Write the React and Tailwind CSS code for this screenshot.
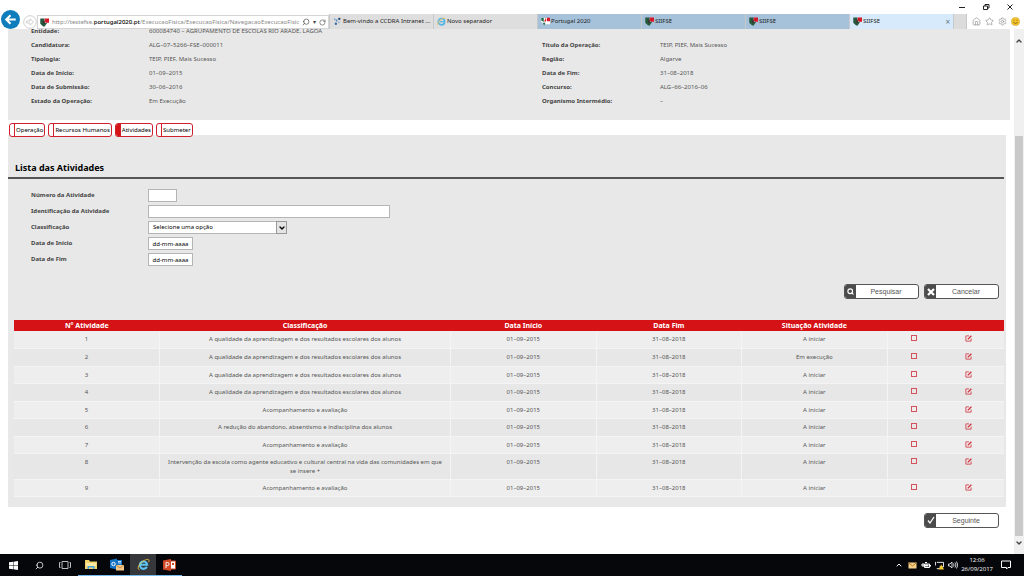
import { useState } from "react";
import { ChevronUp, ChevronDown, House, Star, Settings, Search, RotateCw } from "lucide-react";

const infoLeft = [
  ["Entidade:", "600084740 – AGRUPAMENTO DE ESCOLAS RIO ARADE, LAGOA"],
  ["Candidatura:", "ALG–07–5266–FSE–000011"],
  ["Tipologia:", "TEIP, PIEF, Mais Sucesso"],
  ["Data de Início:", "01–09–2015"],
  ["Data de Submissão:", "30–06–2016"],
  ["Estado da Operação:", "Em Execução"],
];

const infoRight = [
  ["Título da Operação:", "TEIP, PIEF, Mais Sucesso"],
  ["Região:", "Algarve"],
  ["Data de Fim:", "31–08–2018"],
  ["Concurso:", "ALG–66–2016–06"],
  ["Organismo Intermédio:", "–"],
];

const sections = ["Operação", "Recursos Humanos", "Atividades", "Submeter"];

const QUALIDADE = "A qualidade da aprendizagem e dos resultados escolares dos alunos";
const ACOMPANHAMENTO = "Acompanhamento e avaliação";

const activities = [
  { id: 1, type: QUALIDADE, status: "A iniciar" },
  { id: 2, type: QUALIDADE, status: "Em execução" },
  { id: 3, type: QUALIDADE, status: "A iniciar" },
  { id: 4, type: QUALIDADE, status: "A iniciar" },
  { id: 5, type: ACOMPANHAMENTO, status: "A iniciar" },
  { id: 6, type: "A redução do abandono, absentismo e indisciplina dos alunos", status: "A iniciar" },
  { id: 7, type: ACOMPANHAMENTO, status: "A iniciar" },
  {
    id: 8,
    type: "Intervenção da escola como agente educativo e cultural central na vida das comunidades em que se insere +",
    status: "A iniciar",
  },
  { id: 9, type: ACOMPANHAMENTO, status: "A iniciar" },
];

const browserTabs = [
  { title: "Bem-vindo a CCDRA Intranet ...", icon: "dots", style: "bg-[#dedede]" },
  { title: "Novo separador", icon: "ie", style: "bg-[#dedede]" },
  { title: "Portugal 2020", icon: "pt", style: "bg-[#a6c1da]" },
  { title: "SIIFSE", icon: "siifse", style: "bg-[#a6c1da]" },
  { title: "SIIFSE", icon: "siifse", style: "bg-[#a6c1da]" },
  { title: "SIIFSE", icon: "siifse", style: "bg-[#d7eafc]", active: true },
];

function SiteIcon({ name }) {
  if (name === "dots") {
    return (
      <svg viewBox="0 0 10 10" className="size-[9px] shrink-0">
        <circle cx="7" cy="2" r="1.3" fill="#27496d" />
        <circle cx="4" cy="4" r="1.1" fill="#4a86c5" />
        <circle cx="2" cy="2.4" r=".8" fill="#4a86c5" />
        <circle cx="3.2" cy="7.5" r="1.3" fill="#3d6b98" />
        <circle cx="6.5" cy="6" r=".9" fill="#7ba6cf" />
      </svg>
    );
  }
  if (name === "ie") {
    return (
      <svg viewBox="0 0 10 10" className="size-[9px] shrink-0">
        <circle cx="5" cy="5.2" r="3.5" fill="none" stroke="#52b5e6" strokeWidth="1.8" />
        <path d="M3 5.2h5" stroke="#52b5e6" strokeWidth="1.4" />
        <path d="M1 8.8C-.2 6 6 .2 9 1.4" fill="none" stroke="#efc04a" strokeWidth="1" />
      </svg>
    );
  }
  if (name === "pt") {
    return (
      <svg viewBox="0 0 10 10" className="size-[9px] shrink-0">
        <path d="M0 1h10v7H3L0 5z" fill="#fff" />
        <path d="M.3 1h2.700v4.500L.3 4zM2 6.500h3L3.500 9.500z" fill="#176a43" />
        <path d="M3.400 5 5.500.8V5zM6.500.8H10v4H6.500z" fill="#d7182a" />
      </svg>
    );
  }
  return (
    <svg viewBox="0 0 10 10" className="size-[9px] shrink-0">
      <path d="M.3.5H5v4.700h3L5.200 9.500H3.500L.3 6.500z" fill="#24583f" />
      <path d="M5.200.5H10v4.700H6.800L5.200 3.800z" fill="#d7182a" />
      <path d="M3.500 3.500h2v2.700h-2z" fill="#4c2b2a" />
    </svg>
  );
}

function BrowserBar() {
  return (
    <header className="shrink-0 bg-white">
      <div className="flex h-[14px] items-center justify-end gap-[16px] pr-[10px] text-black">
        <button type="button" aria-label="Minimizar">
          <svg viewBox="0 0 8 8" className="size-2"><path d="M1 4.500h6" stroke="#222" /></svg>
        </button>
        <button type="button" aria-label="Restaurar">
          <svg viewBox="0 0 8 8" className="size-2" fill="none" stroke="#222">
            <path d="M1.500 3h4v3.500h-4zM3 3V1.500h4V5H5.500" />
          </svg>
        </button>
        <button type="button" aria-label="Fechar">
          <svg viewBox="0 0 8 8" className="size-2" stroke="#222"><path d="m1.500 1.500 5 5m0-5-5 5" /></svg>
        </button>
      </div>
      <div className="flex h-[15px] items-end">
        <button type="button" aria-label="Retroceder" className="ml-[1px] shrink-0">
          <svg viewBox="0 0 20 20" className="block size-[19px]">
            <circle cx="10" cy="10" r="10" fill="#0f7dbb" />
            <path d="M15.500 10H5.500m4.500-4.500L5.500 10l4.500 4.500" fill="none" stroke="#fff" strokeWidth="2.200" />
          </svg>
        </button>
        <button type="button" aria-label="Avançar" className="ml-[3px] shrink-0">
          <svg viewBox="0 0 14 14" className="block size-[14px]" fill="none" stroke="#cfcfcf">
            <circle cx="7" cy="7" r="6.300" />
            <path d="M3.500 6h3.500V3.800L10.500 7 7 10.200V8H3.500z" />
          </svg>
        </button>
        <div className="flex h-[14px] w-[292px] shrink-0 items-center gap-[3px] border border-[#d5d5d5] bg-white px-[2px] text-[6px] text-[#888]">
          <SiteIcon name="siifse" />
          <span className="flex-1 whitespace-nowrap">
            http://testefse.<b className="font-medium text-black">portugal2020.pt</b>
            /ExecucaoFisica/ExecucaoFisica/NavegacaoExecucaoFisic
          </span>
          <Search className="size-[8px] -scale-x-100 text-[#444]" />
          <span className="text-[6px] text-[#444]">▾</span>
          <RotateCw className="size-[7px] text-[#444]" />
        </div>
        <nav className="flex h-[15px] min-w-0 flex-1">
          {browserTabs.map((tab, i) => (
            <a
              key={i}
              href="#"
              className={`flex min-w-0 flex-1 items-center gap-[1px] border-l border-[#c9c9c9] pl-[3px] text-[6px] whitespace-nowrap text-[#222] ${tab.style}`}
            >
              <SiteIcon name={tab.icon} />
              <span className="flex-1">{tab.title}</span>
              {tab.active && <span className="pr-[3px] text-[8px] text-[#5d7387]">×</span>}
            </a>
          ))}
          <span className="w-[14px] border-x border-[#c9c9c9] bg-[#dcdcdc]" />
        </nav>
        <div className="flex h-[15px] shrink-0 items-center gap-[4px] pr-[4px] pl-[5px] text-[#999]">
          <House className="size-[9px]" strokeWidth={2} />
          <Star className="size-[9px]" strokeWidth={2} />
          <Settings className="size-[9px]" strokeWidth={2} />
          <svg viewBox="0 0 10 10" className="size-[9px]">
            <circle cx="5" cy="5" r="4.500" fill="#f5c42c" stroke="#c89a26" strokeWidth=".5" />
            <path d="M3.300 3v1.200M6.700 3v1.200M2.500 6q2.500 2.500 5 0" fill="none" stroke="#6b5010" strokeWidth=".8" />
          </svg>
        </div>
      </div>
    </header>
  );
}

function InfoList({ rows }) {
  return (
    <dl className="text-[6px] leading-[14px] text-[#555]">
      {rows.map(([label, value]) => (
        <div key={label} className="flex">
          <dt className="w-[118px] font-bold text-[#444]">{label}</dt>
          <dd className="whitespace-nowrap">{value}</dd>
        </div>
      ))}
    </dl>
  );
}

function FormRow({ id, label, children }) {
  return (
    <div className="flex h-[13px] items-center">
      <label htmlFor={id} className="w-[117px] text-[6px] font-bold text-[#444]">
        {label}
      </label>
      {children}
    </div>
  );
}

function ActionButton({ icon, children }) {
  return (
    <button
      type="button"
      className="flex h-[15px] w-[75px] overflow-hidden rounded-[3px] border border-[#555] bg-white font-['Liberation_Sans',sans-serif] text-[7px] leading-[13px] text-[#555]"
    >
      <span className="flex h-full w-[11px] items-center justify-center bg-[#4b4b4b]">{icon}</span>
      <span className="flex-1 pr-[2px]">{children}</span>
    </button>
  );
}

function EditIcon() {
  return (
    <svg viewBox="0 0 8 8" className="block size-[7px]" fill="none" stroke="#cf2f3b">
      <path d="M4.500 1H1v6h6V4" strokeWidth=".9" />
      <path d="M3.200 5 7.300.9" strokeWidth="1.500" />
    </svg>
  );
}

function ActivitiesTable() {
  return (
    <table className="w-full table-fixed border-collapse text-center text-[6px] leading-[9px] text-[#555]">
      <thead>
        <tr className="h-[11px] bg-[#d51317] text-[7px] text-white">
          <th className="w-[14.7%]">N° Atividade</th>
          <th className="w-[29.4%]">Classificação</th>
          <th className="w-[14.7%]">Data Início</th>
          <th className="w-[14.7%]">Data Fim</th>
          <th className="w-[14.7%]">Situação Atividade</th>
          <th className="w-[5.4%]" />
          <th />
        </tr>
      </thead>
      <tbody>
        {activities.map((item) => (
          <tr
            key={item.id}
            className="h-[17px] bg-[#eeeeee] align-top even:h-[18px] even:bg-[#e7e7e7] [&>td]:border-b [&>td]:border-[#f4f4f4] [&>td]:pt-[4px] [&>td]:pb-[3px]"
          >
            <td className="border-r">{item.id}</td>
            <td className="border-r px-[6px]">{item.type}</td>
            <td className="border-r">01–09–2015</td>
            <td className="border-r">31–08–2018</td>
            <td className="border-r">{item.status}</td>
            <td>
              <button type="button" aria-label={`Ver atividade ${item.id}`} className="mx-auto block size-[6px] border border-[#d4525b]" />
            </td>
            <td className="pr-[8px]">
              <button type="button" aria-label={`Editar atividade ${item.id}`} className="mx-auto block">
                <EditIcon />
              </button>
            </td>
          </tr>
        ))}
      </tbody>
    </table>
  );
}

function ScrollBar() {
  return (
    <div className="flex w-[10px] shrink-0 flex-col items-center bg-[#f0f0f0] pt-[8px] pb-[7px] text-[#444]">
      <ChevronUp className="size-[8px]" strokeWidth={4} />
      <div className="mt-[91px] mb-[3px] w-[8px] flex-1 bg-[#c9c9c9]" />
      <ChevronDown className="size-[8px]" strokeWidth={4} />
    </div>
  );
}

function Taskbar() {
  return (
    <footer className="flex h-[22px] shrink-0 items-stretch bg-[#05070b] text-white">
      <div className="flex [&>button]:flex [&>button]:w-[26px] [&>button]:items-center [&>button]:justify-center">
        <button type="button" aria-label="Iniciar">
          <svg viewBox="0 0 10 10" className="size-[9px]" fill="#fff">
            <path d="M0 1.400 4.500.8v4H0zM5 .7 10 0v4.800H5zM0 5.300h4.500v4L0 8.700zM5 5.300h5V10l-5-.7z" />
          </svg>
        </button>
        <button type="button" aria-label="Procurar">
          <Search className="size-[9px] -scale-x-100" strokeWidth={2} />
        </button>
        <button type="button" aria-label="Vista de tarefas">
          <svg viewBox="0 0 12 10" className="h-[10px] w-[12px]" fill="none" stroke="#bbb">
            <path d="M3 1.500h6v7H3zM1.500 2.500h-1v5h1M10.500 2.500h1v5h-1" />
          </svg>
        </button>
        <button type="button" aria-label="Explorador" className="border-b border-[#76b9ed]">
          <svg viewBox="0 0 12 11" className="h-[11px] w-[12px]">
            <path d="M0 1h4l1 1.500h7V10H0z" fill="#f3d36a" />
            <path d="M1 4h10v3H1z" fill="#fbeaa6" />
            <path d="M2.500 10V7h7v3H8V8.500H4V10z" fill="#4ba3dc" />
          </svg>
        </button>
        <button type="button" aria-label="Outlook" className="border-b border-[#76b9ed]">
          <svg viewBox="0 0 14 13" className="h-[13px] w-[14px]">
            <path d="M0 2 7 .5v11L0 10zM7 2h5v5H7z" fill="#1273c5" />
            <circle cx="3.500" cy="6" r="1.700" fill="none" stroke="#fff" />
            <path d="M8 3.500h3M8 5h3" stroke="#fff" strokeWidth=".8" />
            <path d="M6 7h8v5.500H6z" fill="#f6c987" />
            <path d="m6 7 4 3 4-3" fill="none" stroke="#a96d27" strokeWidth=".7" />
          </svg>
        </button>
        <button type="button" aria-label="Internet Explorer" className="border-b border-[#76b9ed] bg-[#35373b]">
          <svg viewBox="0 0 14 14" className="size-[13px]">
            <path d="M10.600 9.500A4 4 0 1 1 11 7.300H4" fill="none" stroke="#5bc6f4" strokeWidth="2.200" />
            <path d="M2.600 12.600C0 12 1.500 8 4 5.500 7 2.500 11.500.5 12.700 1.900c.5.700.2 1.600-.3 2.500" fill="none" stroke="#f6cd43" strokeWidth=".9" />
          </svg>
        </button>
        <button type="button" aria-label="PowerPoint" className="border-b border-[#76b9ed]">
          <svg viewBox="0 0 13 12" className="h-[12px] w-[13px]">
            <path d="M6 2h6.500v8H6z" fill="#fff" stroke="#d24726" />
            <path d="M0 1.500 8 0v12l-8-1.500z" fill="#d24726" />
            <path d="M3 9V3.500h1.500a1.500 1.500 0 0 1 0 3.200H3M9 8h2.500" fill="none" stroke="#fff" strokeWidth=".9" />
            <path d="M9 4h2v2H9z" fill="#d24726" />
          </svg>
        </button>
      </div>
      <div className="ml-auto flex items-center gap-[3px] pr-[13px]">
        <ChevronUp className="size-[8px]" strokeWidth={3} />
        <div className="flex items-center gap-[4px] pl-[2px]">
          <svg viewBox="0 0 9 7" className="h-[7px] w-[9px]">
            <path d="M.5.5h8v6h-8z" fill="#f5d08d" />
            <path d="m.5.5 4 3.500 4-3.500" fill="none" stroke="#b5721e" />
          </svg>
          <svg viewBox="0 0 10 8" className="h-[8px] w-[10px]" fill="none" stroke="#fff">
            <path d="M3.500 3h5v3.500h-5zM9.500 4v1.500M0 4h3M2 2v4M4 1.500h2" />
            <path d="M4 4.500h3.500" strokeWidth="2" />
          </svg>
          <svg viewBox="0 0 10 10" className="size-[9px]" fill="none" stroke="#fff">
            <path d="M2 1.500h7.500v5H5M.5 1v4M2 8.500h3" />
            <path d="m7 4 3 5.500H4z" fill="#f8cb2e" stroke="none" />
          </svg>
          <svg viewBox="0 0 10 8" className="h-[8px] w-[10px]" fill="none" stroke="#fff" strokeWidth=".8">
            <path d="M.5 3H2l2-2v6L2 5H.5zM5.500 2.500q1 1.500 0 3M7 1.500q2 2.500 0 5M8.500.5q2.500 3.500 0 7" />
          </svg>
        </div>
        <div className="text-center font-['Open_Sans',sans-serif] text-[6px] leading-[9px]">
          <div>12:06</div>
          <div>26/09/2017</div>
        </div>
        <svg viewBox="0 0 10 10" className="ml-[5px] size-[10px]" fill="none" stroke="#fff">
          <path d="M.5 1h9v6.500H7L5.500 9V7.500h-5z" />
        </svg>
      </div>
    </footer>
  );
}

export default function App() {
  const [active, setActive] = useState("Atividades");

  const inputClass = "h-[13px] border border-[#b5b5b5] bg-white text-[6px] text-black placeholder:text-black";

  return (
    <div className="flex h-screen flex-col overflow-hidden bg-white font-['Noto_Sans',sans-serif]">
      <BrowserBar />
      <div className="flex min-h-0 flex-1">
        <main className="min-w-0 flex-1 overflow-hidden pl-[8px]">
          <section className="mr-[4px] flex h-[91px] bg-[#e8e8e8]">
            <div className="-mt-[5px] w-[51%] pl-[23px]">
              <InfoList rows={infoLeft} />
            </div>
            <div className="mt-[9px] pl-[23px]">
              <InfoList rows={infoRight} />
            </div>
          </section>

          <nav className="relative -mb-[2px] flex gap-[3px] pt-[3px] pl-[1px]">
            {sections.map((name) => (
              <button
                key={name}
                type="button"
                onClick={() => setActive(name)}
                className="flex h-[14px] overflow-hidden rounded-[3px] border border-[#d0202e] bg-white text-[6px] leading-[12px] text-black"
              >
                <span className={`h-full w-[5px] border-r border-[#d0202e] ${active === name ? "bg-[#d51317]" : ""}`} />
                <span className="px-[1px]">{name}</span>
              </button>
            ))}
          </nav>

          <section className="mr-[8px] bg-[#e8e8e8] pb-[10px]">
            <h1 className="mr-[2px] border-b-2 border-[#555] pt-[26px] pb-[3px] pl-[7px] text-[9px] leading-[13px] font-bold text-black">
              Lista das Atividades
            </h1>
            <form className="mt-[10px]" onSubmit={(e) => e.preventDefault()}>
              <div className="flex flex-col gap-[3px] pl-[23px]">
                <FormRow id="numero" label="Número da Atividade">
                  <input id="numero" className={`w-[29px] ${inputClass}`} />
                </FormRow>
                <FormRow id="identificacao" label="Identificação da Atividade">
                  <input id="identificacao" className={`w-[242px] ${inputClass}`} />
                </FormRow>
                <FormRow id="classificacao" label="Classificação">
                  <div className="relative">
                    <select id="classificacao" className={`block w-[139px] appearance-none pl-[4px] ${inputClass}`}>
                      <option>Selecione uma opção</option>
                    </select>
                    <span className="pointer-events-none absolute inset-y-0 right-0 flex w-[11px] items-center justify-center border border-[#999] bg-[#e4e4e4]">
                      <ChevronDown className="size-[8px] text-black" strokeWidth={4} />
                    </span>
                  </div>
                </FormRow>
                <FormRow id="inicio" label="Data de Início">
                  <input id="inicio" placeholder="dd-mm-aaaa" className={`w-[45px] text-center ${inputClass}`} />
                </FormRow>
                <FormRow id="fim" label="Data de Fim">
                  <input id="fim" placeholder="dd-mm-aaaa" className={`w-[45px] text-center ${inputClass}`} />
                </FormRow>
              </div>
              <div className="mt-[18px] flex justify-end gap-[5px] pr-[7px]">
                <ActionButton icon={<Search className="size-[7px] text-white" strokeWidth={4} />}>Pesquisar</ActionButton>
                <ActionButton
                  icon={
                    <svg viewBox="0 0 8 8" className="size-[8px]" stroke="#fff" strokeWidth="2.200">
                      <path d="m1 1 6 6m0-6L1 7" />
                    </svg>
                  }
                >
                  Cancelar
                </ActionButton>
              </div>
            </form>
            <div className="mt-[21px] mr-[2px] ml-[6px]">
              <ActivitiesTable />
            </div>
          </section>

          <div className="flex justify-end pt-[6px] pr-[15px]">
            <ActionButton
              icon={
                <svg viewBox="0 0 8 8" className="size-[8px]" fill="none" stroke="#fff" strokeWidth="1.300">
                  <path d="m1 4.500 2 2.500 4-6" />
                </svg>
              }
            >
              Seguinte
            </ActionButton>
          </div>
        </main>
        <ScrollBar />
      </div>
      <Taskbar />
    </div>
  );
}
